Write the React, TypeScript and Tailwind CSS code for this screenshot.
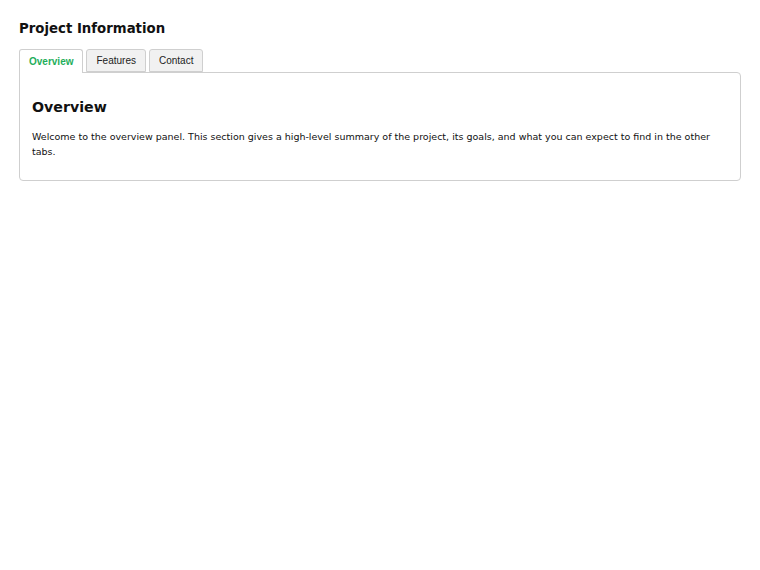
import { useState } from "react";

const tabs = [
  {
    id: "overview",
    label: "Overview",
    title: "Overview",
    body: "Welcome to the overview panel. This section gives a high-level summary of the project, its goals, and what you can expect to find in the other tabs.",
  },
  {
    id: "features",
    label: "Features",
    title: "Features",
    body: "A list of the main features of the project.",
  },
  {
    id: "contact",
    label: "Contact",
    title: "Contact",
    body: "How to get in touch with the team.",
  },
];

export default function App() {
  const [active, setActive] = useState("overview");
  const current = tabs.find((t) => t.id === active)!;

  return (
    <div className="min-h-screen bg-white px-[19px] pt-[20px] font-['DejaVu_Sans',sans-serif] text-[#111]">
      <h1 className="text-[13.3px] font-bold leading-[18px]">Project Information</h1>

      <div className="mt-[11px]">
        <div className="flex gap-[3px]">
          {tabs.map((tab) => {
            const on = tab.id === active;
            return (
              <button
                key={tab.id}
                onClick={() => setActive(tab.id)}
                className={
                  on
                    ? "relative z-10 -mb-px h-[24px] rounded-t-[3px] border border-b-0 border-[#cfcfcf] bg-white px-[9px] font-['Liberation_Sans',Arial,sans-serif] text-[10px] font-bold text-[#1fae5b]"
                    : "h-[23px] rounded-t-[3px] border border-[#cfcfcf] bg-[#f1f1f1] px-[9px] font-['Liberation_Sans',Arial,sans-serif] text-[10px] text-[#222]"
                }
              >
                {tab.label}
              </button>
            );
          })}
        </div>
        <div className="rounded-b-[4px] rounded-tr-[4px] border border-[#cfcfcf] px-[12px] pb-[21px] pt-[25px]">
          <h2 className="text-[14.2px] font-bold leading-[18px]">{current.title}</h2>
          <p className="mt-[13px] text-[9.5px] leading-[15px] text-[#111]">{current.body}</p>
        </div>
      </div>
    </div>
  );
}
